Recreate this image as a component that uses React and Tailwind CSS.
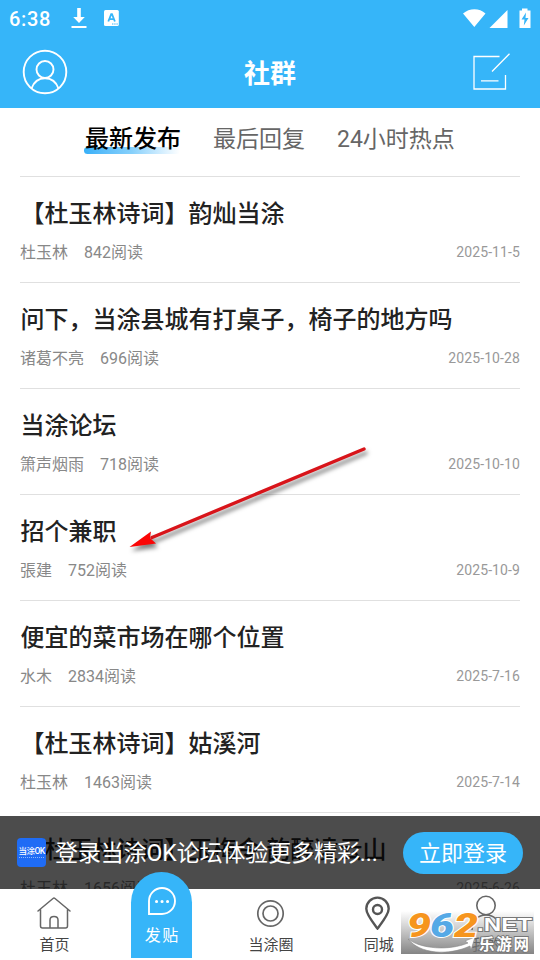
import React from 'react';

const posts = [
  { id: 1, title: '【杜玉林诗词】韵灿当涂', author: '杜玉林', views: 842, date: '2025-11-5' },
  { id: 2, title: '问下，当涂县城有打桌子，椅子的地方吗', author: '诸葛不亮', views: 696, date: '2025-10-28' },
  { id: 3, title: '当涂论坛', author: '箫声烟雨', views: 718, date: '2025-10-10' },
  { id: 4, title: '招个兼职', author: '張建', views: 752, date: '2025-10-9' },
  { id: 5, title: '便宜的菜市场在哪个位置', author: '水木', views: 2834, date: '2025-7-16' },
  { id: 6, title: '【杜玉林诗词】姑溪河', author: '杜玉林', views: 1463, date: '2025-7-14' },
  { id: 7, title: '【杜玉林诗词】玉梅令 韵醉凌云山', author: '杜玉林', views: 1656, date: '2025-6-26' },
];

function StatusBar() {
  return (
    <div className="flex h-9 items-center pl-[9px] pr-[9px] text-white">
      <span className="w-[60px] pt-0.5 text-[20px] font-medium leading-none tracking-[0.7px]">6:38</span>
      <svg width="18" height="22" viewBox="0 0 18 22" fill="currentColor" className="ml-px">
        <path d="M7.200 1h3.600v9h4l-5.800 6-5.800-6h4zM1.500 19h15v2h-15z" />
      </svg>
      <svg width="16" height="16" viewBox="0 0 16 16" className="ml-4">
        <rect x="0" y="0" width="14.800" height="16" rx="1.500" fill="currentColor" />
        <path d="M4.300 11.500 7.200 4.200h.8l2.900 7.300M5.400 9.200h4.400" fill="none" stroke="#36b5f9" strokeWidth="1.800" />
        <path d="M8 14h1.400m.8 0h1.400m.8 0h1.400" stroke="#36b5f9" strokeWidth="1.200" />
      </svg>
      <svg width="68" height="22" viewBox="0 0 68 22" fill="currentColor" className="ml-auto">
        <path d="M0 6.500C6.500.700 16.500.700 22.500 6.500L11.300 20zM44.500 3v18h-18zM56.500 3.500H59V1.500h5.500v2H67.500V21h-11z" />
        <path d="m63 5.500-4.500 7h3l-.700 6 4.700-7.500h-3z" fill="#36b5f9" />
      </svg>
    </div>
  );
}

function Header() {
  return (
    <header className="h-[108px] bg-[#36b5f9] text-white">
      <StatusBar />
      <div className="flex h-[72px] items-center justify-between pl-[22px] pr-[30px]">
        <svg width="46" height="46" viewBox="0 0 46 46" fill="none" stroke="currentColor" strokeWidth="1.900">
          <circle cx="23" cy="23" r="21.300" />
          <circle cx="23" cy="20.500" r="8.500" />
          <path d="M9.500 39.500C12 32.500 16.500 29.300 23 29.300s11 3.200 13.500 10.200" />
        </svg>
        <h1 className="pt-[3px] text-[26px] font-bold leading-none">社群</h1>
        <svg width="38" height="38" viewBox="0 0 38 38" fill="none" stroke="currentColor" strokeWidth="1.300">
          <path d="M27.500 3.500H2v32.500h31.500V22M9 27.800h17.500M20 18.500 37.500 .800" />
        </svg>
      </div>
    </header>
  );
}

function Tabs() {
  return (
    <nav className="flex h-[68px] pl-[85px] pt-[15px] text-[23px] leading-[34px] text-[#666]">
      <div className="relative w-[128px] text-[24px] font-medium text-black">
        <span className="absolute -left-px top-[24px] h-[7px] w-[96px] rounded-full bg-linear-to-r from-[#36b0f8] via-[#86d0fb] to-white" />
        <span className="relative -top-px">最新发布</span>
      </div>
      <div className="w-[124px]">最后回复</div>
      <div className="whitespace-nowrap">24小时热点</div>
    </nav>
  );
}

function PostRow({ post }) {
  return (
    <li className="h-[106px] border-t border-[#e0e0e0] pt-[19px]">
      <h2 className="whitespace-nowrap pl-[0.5px] text-[24px] font-medium leading-[36px] text-[#222]">{post.title}</h2>
      <div className="mt-[9px] flex items-center text-[16px] leading-[24px] text-[#888]">
        <span>{post.author}</span>
        <span className="ml-4">{post.views}阅读</span>
        <span className="ml-auto pb-[2px] text-[14px] leading-[22px] tracking-[0.1px] text-[#999]">{post.date}</span>
      </div>
    </li>
  );
}

// Translucent prompt that sits over the end of the list
function LoginBar() {
  return (
    <div className="absolute inset-x-0 top-[816px] flex h-[73px] items-center bg-black/70 pl-[17px] pr-[17px] text-white">
      <div className="flex h-[29px] w-[29px] flex-col items-center justify-center rounded bg-[#1f6cf5]">
        <span className="whitespace-nowrap text-[8.5px] font-medium leading-[9px] tracking-[-0.5px]">当涂OK</span>
        <span className="mt-px w-[25px] border-t border-dotted border-white/50" />
      </div>
      <p className="ml-[9px] w-[326px] whitespace-nowrap pt-[2px] text-[23px] leading-[34px] tracking-[-0.1px]">登录当涂OK论坛体验更多精彩...</p>
      <button className="ml-auto h-[42px] w-[120px] rounded-full bg-[#36b5f9] pt-[2px] text-[22px] leading-none">立即登录</button>
    </div>
  );
}

function HomeIcon() {
  return (
    <svg width="36" height="34" viewBox="0 0 36 34" fill="none" stroke="#666" strokeWidth="1.500" strokeLinejoin="round" strokeLinecap="round">
      <path d="M2 15 17 2.500q1-.800 2 0L34 15M4.500 13.500V30q0 2 2 2h23q2 0 2-2V13.500M14 32v-8q0-3.500 4-3.500t4 3.500v8" />
    </svg>
  );
}

function CircleIcon() {
  return (
    <svg width="30" height="34" viewBox="0 0 30 34" fill="none" stroke="#666" strokeWidth="1.700">
      <circle cx="15.500" cy="17.500" r="12.700" />
      <circle cx="15.500" cy="17.500" r="7.500" />
    </svg>
  );
}

function PinIcon() {
  return (
    <svg width="28" height="34" viewBox="0 0 28 34" fill="none" stroke="#555" strokeWidth="2.400">
      <path d="M13.500 32.500C8.500 26 2.300 18.500 2.300 12.800a11.200 11.200 0 0 1 22.400 0C24.700 18.500 18.500 26 13.500 32.500z" />
      <circle cx="13.500" cy="13.500" r="4.500" />
    </svg>
  );
}

function UserIcon() {
  return (
    <svg width="36" height="36" viewBox="0 0 36 36" fill="none" stroke="#666" strokeWidth="1.600">
      <circle cx="18" cy="10.500" r="9.200" />
      <path d="M4 35c1-10 6-15 14-15s13 5 14 15" />
    </svg>
  );
}

function NavItem({ icon, label }) {
  return (
    <div className="flex h-full flex-1 flex-col items-center pt-[7px]">
      <div className="flex h-[34px] items-center">{icon}</div>
      <span className="mt-[4px] pl-px text-[15px] leading-[22px] text-[#444]">{label}</span>
    </div>
  );
}

function BottomNav() {
  return (
    <nav className="absolute inset-x-0 bottom-0 flex h-[71px] bg-white">
      <NavItem icon={<HomeIcon />} label="首页" />
      <div className="flex flex-1 justify-center pr-px">
        <div className="-mt-[17px] flex h-[86px] w-[61px] flex-col items-center rounded-t-full bg-[#36b5f9] pt-[14px] text-white">
          <svg width="30" height="30" viewBox="0 0 30 30" fill="none" stroke="currentColor" strokeWidth="1.900">
            <path d="M2 28V15A13 13 0 1 1 15 28z" />
            <path d="M9.500 15.500h.1m5.400 0h.1m5.400 0h.1" strokeWidth="3" strokeLinecap="round" />
          </svg>
          <span className="mt-[8px] pl-px text-[16px] leading-[24px] tracking-[1.5px]">发贴</span>
        </div>
      </div>
      <NavItem icon={<CircleIcon />} label="当涂圈" />
      <NavItem icon={<PinIcon />} label="同城" />
      <NavItem icon={<UserIcon />} label="我的" />
    </nav>
  );
}

function ArrowMark() {
  return (
    <svg className="absolute left-[120px] top-[430px] drop-shadow-[2px_4px_2px_rgba(0,0,0,0.5)]" width="260" height="130" viewBox="0 0 260 130">
      <path d="M32 107.500 244 19" stroke="#d8141a" strokeWidth="3.400" strokeLinecap="round" />
      <path d="M9.500 117 31 101.500 30 108 36 113.500z" fill="#fa0505" />
    </svg>
  );
}

function SiteMark() {
  return (
    <div className="absolute left-[401px] top-[911px] h-[43px] w-[133px] bg-linear-to-b from-white/0 to-[#777]/90">
      <svg className="absolute left-0 top-[-6px]" width="139" height="50" viewBox="0 0 139 50">
        <path d="M7 34C20 44 48 46 67 38l-3-2 10-4-4 13-1-4C47 51 19 49 7 34z" fill="#fff" stroke="#888" strokeWidth="0.600" />
        <g fontFamily="Roboto" fontWeight="900" fontStyle="italic" fontSize="34" stroke="#fff" strokeWidth="2" paintOrder="stroke">
          <text x="6" y="32" textLength="24" lengthAdjust="spacingAndGlyphs" fill="#f6951e">9</text>
          <text x="29" y="32" textLength="24" lengthAdjust="spacingAndGlyphs" fill="#55a9e6">6</text>
          <text x="53" y="32" textLength="24" lengthAdjust="spacingAndGlyphs" fill="#f6951e">2</text>
        </g>
        <g fill="#fff" stroke="#777" strokeWidth="1.800" paintOrder="stroke" fontWeight="bold">
          <text x="76" y="26" fontFamily="Liberation Sans" fontSize="19" textLength="55" lengthAdjust="spacingAndGlyphs">.NET</text>
          <text x="78" y="45" fontSize="15.500" textLength="50" lengthAdjust="spacing">乐游网</text>
        </g>
      </svg>
    </div>
  );
}

export default function App() {
  return (
    <div className="relative h-[960px] w-[540px] overflow-hidden bg-white font-[Roboto,'Noto_Sans_CJK_SC',sans-serif]">
      <Header />
      <Tabs />
      <ul className="px-5">
        {posts.map((post) => (
          <PostRow key={post.id} post={post} />
        ))}
      </ul>
      <ArrowMark />
      <LoginBar />
      <BottomNav />
      <SiteMark />
    </div>
  );
}
